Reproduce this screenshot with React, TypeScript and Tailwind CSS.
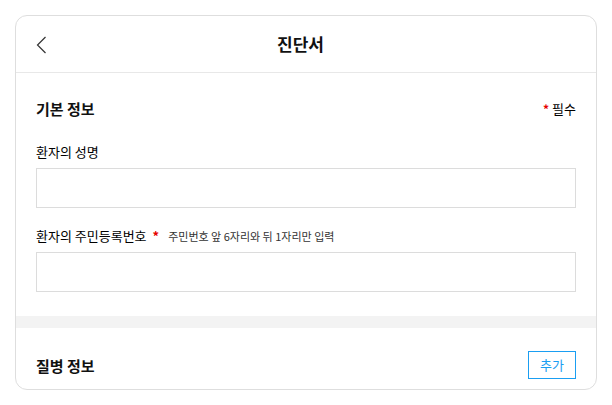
const font = {
  fontFamily: '"Noto Sans CJK KR", "Noto Sans", sans-serif',
};

function Field({ label, required, hint }: { label: string; required?: boolean; hint?: string }) {
  return (
    <div className="flex flex-col">
      <div className="flex h-[20px] items-center">
        <span className="text-[13px] leading-[20px] text-[#000]">{label}</span>
        {required ? <span className="ml-[6px] text-[13px] font-bold leading-[20px] text-[#e60000]">*</span> : null}
        {hint ? <span className="ml-[9px] text-[11px] leading-[20px] text-[#333]">{hint}</span> : null}
      </div>
      <input className="mt-[6px] h-[40px] w-full border border-[#dcdcdc] bg-white px-3 text-[14px] outline-none" />
    </div>
  );
}

export default function App() {
  return (
    <div className="min-h-[405px] w-[612px] bg-white pl-[15px] pt-[15px]" style={font}>
      <div className="flex h-[375px] w-[582px] flex-col overflow-hidden rounded-[12px] border border-[#dedede] bg-white">
        {/* header */}
        <header className="relative flex h-[57px] shrink-0 items-center justify-center border-b border-[#e8e8e8]">
          <button className="absolute left-[19px] top-[19px] flex h-[20px] w-[12px] items-center justify-center">
            <svg width="11" height="18" viewBox="0 0 11 18" fill="none">
              <path d="M9.5 1 L1.5 9 L9.5 17" stroke="#333" strokeWidth="1.2" />
            </svg>
          </button>
          <h1 className="mr-[11px] text-[17px] font-semibold text-[#111]">진단서</h1>
        </header>

        {/* basic info */}
        <section className="flex shrink-0 flex-col px-[20px] pb-[24px] pt-[24px]">
          <div className="flex h-[24px] items-center justify-between">
            <h2 className="text-[15px] font-semibold text-[#111]">기본 정보</h2>
            <span className="flex items-center text-[13px] text-[#000]">
              <span className="mr-[3px] text-[12px] font-bold text-[#e60000]">*</span>
              필수
            </span>
          </div>
          <div className="mt-[21px] flex flex-col gap-[18px]">
            <Field label="환자의 성명" />
            <Field label="환자의 주민등록번호" required hint="주민번호 앞 6자리와 뒤 1자리만 입력" />
          </div>
        </section>

        <div className="h-[12px] shrink-0 bg-[#f3f3f3]" />

        {/* disease info */}
        <section className="flex shrink-0 flex-col px-[20px] pt-[23px]">
          <div className="flex h-[28px] items-center justify-between">
            <h2 className="mt-[2px] text-[15px] font-semibold text-[#111]">질병 정보</h2>
            <button className="flex h-[28px] w-[48px] items-center justify-center border border-[#1a9ef2] text-[13px] text-[#1a9ef2]">
              추가
            </button>
          </div>
        </section>
      </div>
    </div>
  );
}
